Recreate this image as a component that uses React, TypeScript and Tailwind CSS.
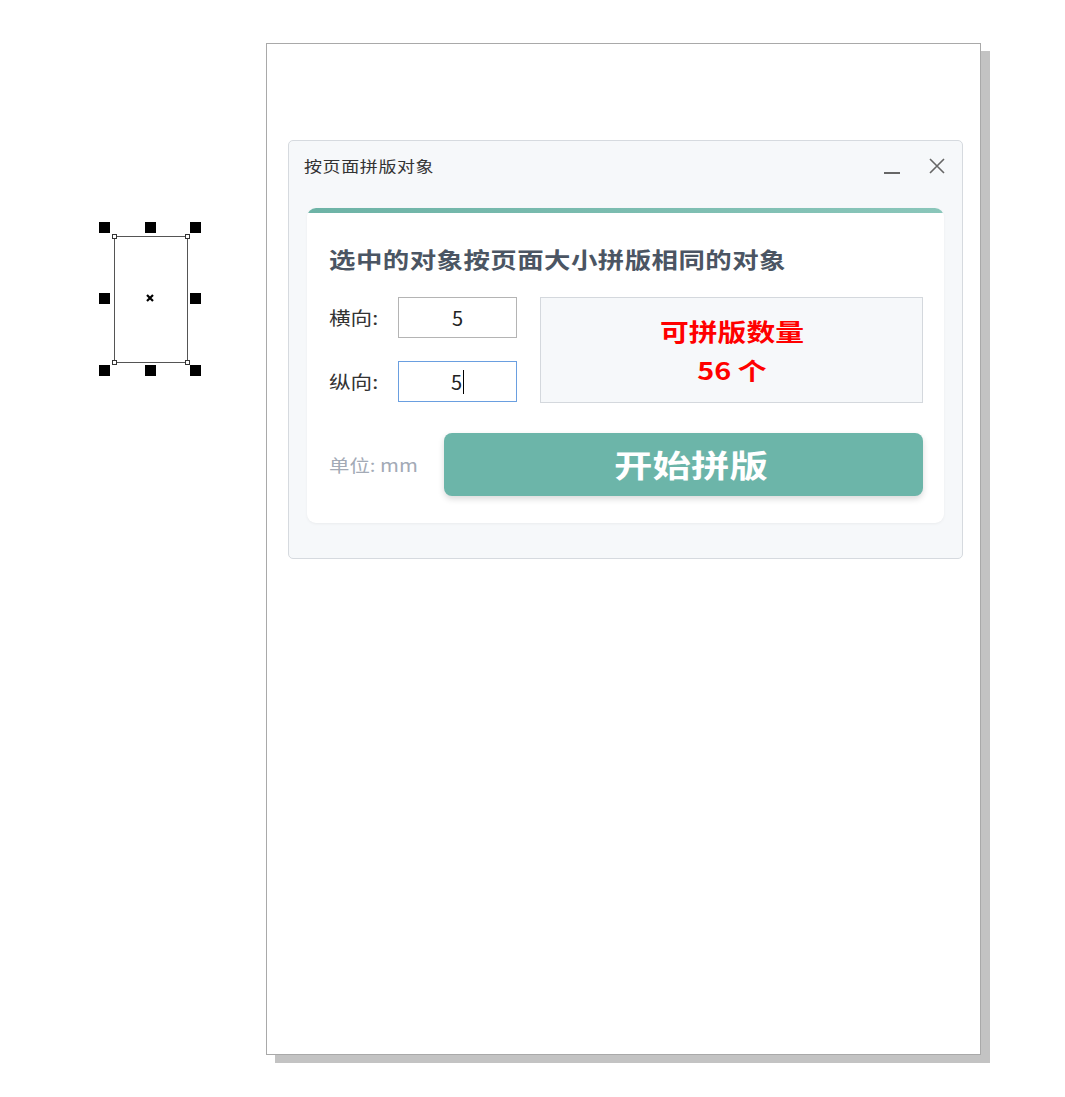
import React from "react";

const handles = [
  "left-[99px] top-[222px]",
  "left-[145px] top-[222px]",
  "left-[190px] top-[222px]",
  "left-[99px] top-[293px]",
  "left-[190px] top-[293px]",
  "left-[99px] top-[365px]",
  "left-[145px] top-[365px]",
  "left-[190px] top-[365px]",
];

function SelectedObject() {
  return (
    <>
      <div className="absolute left-[114px] top-[236px] w-[74px] h-[127px] border-[1.5px] border-[#555]">
        <div className="absolute -left-[3px] -top-[3px] w-[5px] h-[5px] border border-[#333] bg-white" />
        <div className="absolute -right-[3px] -top-[3px] w-[5px] h-[5px] border border-[#333] bg-white" />
        <div className="absolute -left-[3px] -bottom-[3px] w-[5px] h-[5px] border border-[#333] bg-white" />
        <div className="absolute -right-[3px] -bottom-[3px] w-[5px] h-[5px] border border-[#333] bg-white" />
      </div>
      {handles.map((pos) => (
        <div key={pos} className={`absolute w-[11px] h-[11px] bg-black ${pos}`} />
      ))}
      <svg className="absolute left-[145px] top-[293px]" width="10" height="10" viewBox="0 0 10 10">
        <path d="M2 2 L8 8 M8 2 L2 8" stroke="#000" strokeWidth="2.2" />
      </svg>
    </>
  );
}

function NumberBox({ value, focused }: { value: string; focused?: boolean }) {
  return (
    <div
      className={`w-[119px] h-[41px] flex items-center justify-center bg-white text-[20px] text-[#222] border ${
        focused ? "border-[#6a9fe0]" : "border-[#b4b4b4]"
      }`}
    >
      <span>{value}</span>
      {focused && <span className="w-px h-[24px] bg-black ml-px" />}
    </div>
  );
}

// the dialog renders its glyphs a little wide, so text is stretched horizontally
function Wide({ children, className = "" }: { children: React.ReactNode; className?: string }) {
  return <span className={`inline-block scale-x-[1.2] ${className}`}>{children}</span>;
}

function ImposeDialog() {
  return (
    <div className="ml-[21px] mt-[96px] w-[675px] h-[419px] bg-[#f6f8fa] border border-[#d6dadf] rounded-[5px] flex flex-col">
      <div className="h-[50px] flex items-center justify-between pl-[15px] pr-[16px]">
        <Wide className="origin-left text-[15px] text-[#333] tracking-[0.5px]">按页面拼版对象</Wide>
        <div className="flex items-center gap-[28px]">
          <div className="w-[16px] h-[2px] bg-[#666] mt-[13px]" />
          <svg width="18" height="18" viewBox="0 0 18 18">
            <path d="M2 2 L16 16 M16 2 L2 16" stroke="#666" strokeWidth="1.6" />
          </svg>
        </div>
      </div>

      <div className="mx-[18px] mt-[17px] bg-white rounded-[9px] overflow-hidden shadow-[0_1px_3px_rgba(0,0,0,0.05)]">
        <div className="h-[5px] bg-gradient-to-r from-[#6db3a6] to-[#8ac6ba]" />
        <div className="pl-[22px] pr-[21px] pt-[30px] pb-[27px]">
          <h2 className="text-[22px] leading-[30px] font-bold text-[#4b5563]">
            <Wide className="origin-left tracking-[0.4px]">选中的对象按页面大小拼版相同的对象</Wide>
          </h2>

          <div className="mt-[24px] flex gap-[23px]">
            <div className="flex flex-col gap-[23px]">
              <div className="flex items-center">
                <span className="w-[69px] text-[18px] text-[#333]">
                  <Wide className="origin-left">横向:</Wide>
                </span>
                <NumberBox value="5" />
              </div>
              <div className="flex items-center">
                <span className="w-[69px] text-[18px] text-[#333]">
                  <Wide className="origin-left">纵向:</Wide>
                </span>
                <NumberBox value="5" focused />
              </div>
            </div>
            <div className="flex-1 h-[106px] bg-[#f6f8fa] border border-[#d4d8dd] flex flex-col items-center justify-center text-[#ff0000] font-bold text-[24px] leading-[39px]">
              <Wide className="origin-center">可拼版数量</Wide>
              <Wide className="origin-center">56 个</Wide>
            </div>
          </div>

          <div className="mt-[30px] flex items-center">
            <span className="w-[115px] text-[17px] text-[#a3aab6]">
              <Wide className="origin-left">单位: mm</Wide>
            </span>
            <button className="flex-1 h-[63px] rounded-[8px] bg-[#6cb5a9] text-white text-[31px] font-bold pl-[14px] shadow-[0_3px_6px_rgba(0,0,0,0.15)]">
              <Wide className="origin-center scale-x-[1.24]">开始拼版</Wide>
            </button>
          </div>
        </div>
      </div>
    </div>
  );
}

export default function App() {
  return (
    <div className="relative w-full h-[1097px] bg-white overflow-hidden font-['Noto_Sans_CJK_SC','Noto_Sans',sans-serif]">
      <SelectedObject />
      <div className="ml-[266px] pt-[43px]">
        <div className="w-[715px] h-[1012px] bg-white border border-[#a9a9a9] shadow-[9px_8px_0_#c3c3c3] overflow-hidden">
          <ImposeDialog />
        </div>
      </div>
    </div>
  );
}
